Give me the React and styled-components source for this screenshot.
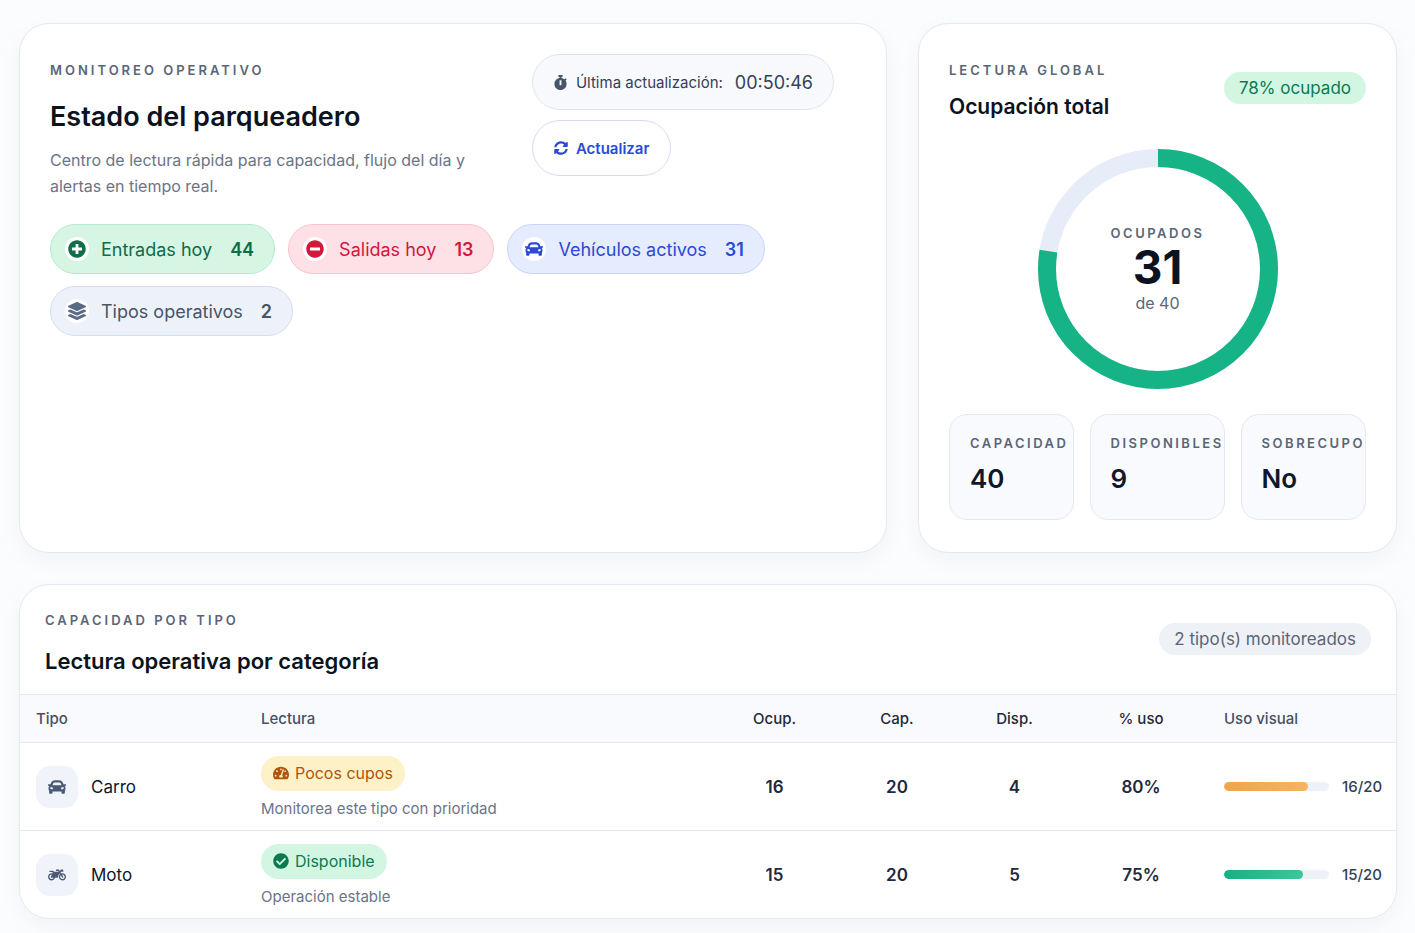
import React from "react";
import styled, { createGlobalStyle } from "styled-components";
import { FaStopwatch, FaSyncAlt, FaPlusCircle, FaMinusCircle, FaCar, FaLayerGroup, FaMotorcycle, FaCheckCircle, FaTachometerAlt } from "react-icons/fa";

const Global = createGlobalStyle`
  body { margin: 0; background: #fbfcfe; font-family: Inter, "Noto Sans", sans-serif; color: #0f172a; }
`;

const Page = styled.div`
  padding: 23px 18px 20px 19px;
  display: flex;
  flex-direction: column;
  gap: 31px;
`;

const Top = styled.div`
  display: grid;
  grid-template-columns: 868px 479px;
  gap: 31px;
`;

const Card = styled.section`
  background: #fff;
  border: 1px solid #e3e9f2;
  border-radius: 30px;
  box-shadow: 0 8px 24px rgba(15, 23, 42, 0.04);
  padding: ${p => p.$pad || "30px"};
  box-sizing: border-box;
  height: ${p => p.$h || "auto"};
  overflow: hidden;
`;

const Eyebrow = styled.div`
  font-size: 13px;
  font-weight: 600;
  letter-spacing: 3px;
  color: #5b6578;
  text-transform: uppercase;
`;

const Title = styled.h2`
  margin: ${p => p.$m || "22px 0 0"};
  font-size: ${p => p.$size || "27px"};
  font-weight: 600;
  color: #0b1220;
`;

const HeadRow = styled.div`
  display: flex;
  justify-content: space-between;
`;

const Sub = styled.p`
  margin: 14px 0 0;
  font-size: 16px;
  line-height: 26px;
  color: #6b7487;
  width: 460px;
`;

const Actions = styled.div`
  display: flex;
  flex-direction: column;
  align-items: flex-start;
  gap: 10px;
  margin-top: 0;
  margin-right: 22px;
`;

const Pill = styled.div`
  display: inline-flex;
  align-items: center;
  gap: 8px;
  height: 56px;
  padding: 0 20px;
  border-radius: 28px;
  border: 1px solid ${p => p.$border || "#dde4f1"};
  background: ${p => p.$bg || "#f7f9fd"};
  color: ${p => p.$color || "#334155"};
  font-size: 15px;
  box-sizing: border-box;
  font-weight: ${p => p.$weight || 400};
`;

const Time = styled.span`
  font-size: 18px;
  color: #334155;
  margin-left: 4px;
`;

const Chips = styled.div`
  display: flex;
  flex-wrap: wrap;
  gap: 12px 13px;
  margin-top: 25px;
  width: 740px;
`;

const Chip = styled.div`
  display: inline-flex;
  align-items: center;
  height: 50px;
  padding: 0 20px 0 14px;
  border-radius: 25px;
  box-sizing: border-box;
  background: ${p => p.$bg};
  border: 1px solid ${p => p.$border};
  color: ${p => p.$color};
  font-size: 18px;
`;

const ChipIcon = styled.span`
  width: 24px;
  height: 24px;
  border-radius: 50%;
  background: #fff;
  display: inline-flex;
  align-items: center;
  justify-content: center;
  margin-right: 12px;
  font-size: 18px;
`;

const ChipNum = styled.b`
  font-weight: 600;
  margin-left: 18px;
`;

const Badge = styled.span`
  display: inline-flex;
  align-items: center;
  gap: 6px;
  height: ${p => p.$h || "32px"};
  padding: 0 15px;
  border-radius: 16px;
  background: ${p => p.$bg};
  color: ${p => p.$color};
  font-size: ${p => p.$size || "17px"};
  white-space: nowrap;
`;

const DonutWrap = styled.div`
  position: relative;
  width: 240px;
  height: 240px;
  margin: 30px auto 25px;
`;

const DonutLabel = styled.div`
  position: absolute;
  inset: 0;
  display: flex;
  flex-direction: column;
  align-items: center;
  justify-content: center;
`;

const Small = styled.div`
  font-size: 13px;
  font-weight: 600;
  letter-spacing: 2.5px;
  color: #5b6578;
`;

const Big = styled.div`
  font-size: 46px;
  font-weight: 700;
  line-height: 52px;
  color: #0b1220;
`;

const Of = styled.div`
  font-size: 16px;
  color: #5b6578;
`;

const Stats = styled.div`
  display: grid;
  grid-template-columns: repeat(3, 1fr);
  gap: 16px;
`;

const Stat = styled.div`
  height: 106px;
  border: 1px solid #e3e9f2;
  border-radius: 18px;
  background: #f8fafd;
  padding: 20px 0 0 20px;
  box-sizing: border-box;
`;

const StatVal = styled.div`
  font-size: 26px;
  font-weight: 600;
  margin-top: 12px;
`;

const Cols = "225px 452px 123px 122px 113px 140px 1fr";

const TableHead = styled.div`
  display: grid;
  grid-template-columns: ${Cols};
  padding: 0 16px;
  height: 47px;
  align-items: center;
  border-top: 1px solid #e3e9f2;
  border-bottom: 1px solid #e3e9f2;
  background: #f8fafd;
  font-size: 15px;
  font-weight: 500;
  color: #475063;
`;

const Row = styled.div`
  display: grid;
  grid-template-columns: ${Cols};
  padding: 0 16px;
  height: 87px;
  align-items: center;
  border-bottom: ${p => (p.$last ? "none" : "1px solid #e3e9f2")};
  font-size: 17px;
`;

const Center = styled.div`
  text-align: center;
  font-weight: ${p => p.$w || 500};
  color: #1e293b;
`;

const TypeCell = styled.div`
  display: flex;
  align-items: center;
  gap: 13px;
`;

const TypeIcon = styled.span`
  width: 42px;
  height: 42px;
  border-radius: 14px;
  background: #f0f3f9;
  display: flex;
  align-items: center;
  justify-content: center;
  color: #4b5a74;
  font-size: 18px;
`;

const Note = styled.div`
  font-size: 15px;
  color: #6b7487;
  margin-top: 8px;
`;

const Bar = styled.div`
  display: flex;
  align-items: center;
  gap: 13px;
  font-size: 15px;
  font-weight: 500;
  color: #334155;
`;

const Track = styled.div`
  width: 105px;
  height: 9px;
  border-radius: 5px;
  background: #eef1f7;
  overflow: hidden;
`;

const Fill = styled.div`
  height: 100%;
  border-radius: 5px;
  background: ${p => p.$c};
`;

const rows = [
  { name: "Carro", icon: <FaCar />, badge: "Pocos cupos", bIcon: <FaTachometerAlt />, bBg: "#fdf1c7", bColor: "#b4530a", note: "Monitorea este tipo con prioridad", o: 16, c: 20, d: 4, p: 80, fill: "linear-gradient(90deg,#f0a548,#f5b462)" },
  { name: "Moto", icon: <FaMotorcycle />, badge: "Disponible", bIcon: <FaCheckCircle />, bBg: "#d3f6e3", bColor: "#0b7a4f", note: "Operación estable", o: 15, c: 20, d: 5, p: 75, fill: "linear-gradient(90deg,#14b184,#3cc79a)" },
];

export default function App() {
  const r = 111, circ = 2 * Math.PI * r;
  return (
    <Page>
      <Global />
      <Top>
        <Card $h="530px">
          <HeadRow>
            <div>
              <Eyebrow style={{ marginTop: 8 }}>Monitoreo operativo</Eyebrow>
              <Title>Estado del parqueadero</Title>
              <Sub>Centro de lectura rápida para capacidad, flujo del día y alertas en tiempo real.</Sub>
            </div>
            <Actions>
              <Pill><FaStopwatch color="#475569" /> Última actualización: <Time>00:50:46</Time></Pill>
              <Pill $bg="#fff" $border="#d3dcf3" $color="#2b49d8" $weight={600} style={{ padding: "0 21px" }}>
                <FaSyncAlt size={14} /> Actualizar
              </Pill>
            </Actions>
          </HeadRow>
          <Chips>
            <Chip $bg="#d6f5e3" $border="#b6ead0" $color="#0f6b48"><ChipIcon><FaPlusCircle color="#0e6e48" /></ChipIcon>Entradas hoy<ChipNum>44</ChipNum></Chip>
            <Chip $bg="#fde1e6" $border="#f8c4cd" $color="#d2163c"><ChipIcon><FaMinusCircle color="#d2163c" /></ChipIcon>Salidas hoy<ChipNum>13</ChipNum></Chip>
            <Chip $bg="#e4ecfd" $border="#c7d6f8" $color="#2b49d8"><ChipIcon><FaCar color="#2b49d8" /></ChipIcon>Vehículos activos<ChipNum>31</ChipNum></Chip>
            <Chip $bg="#edf2fa" $border="#d5deec" $color="#475569"><ChipIcon><FaLayerGroup color="#5b6b85" /></ChipIcon>Tipos operativos<ChipNum>2</ChipNum></Chip>
          </Chips>
        </Card>
        <Card $h="530px">
          <HeadRow>
            <div>
              <Eyebrow style={{ marginTop: 8 }}>Lectura global</Eyebrow>
              <Title $size="21px" $m="16px 0 0">Ocupación total</Title>
            </div>
            <Badge $bg="#d3f6e3" $color="#0b7a4f" style={{ marginTop: 18 }}>78% ocupado</Badge>
          </HeadRow>
          <DonutWrap>
            <svg width="240" height="240" viewBox="0 0 240 240">
              <circle cx="120" cy="120" r={r} fill="none" stroke="#e6ecf8" strokeWidth="18" />
              <circle cx="120" cy="120" r={r} fill="none" stroke="#16b386" strokeWidth="18"
                strokeDasharray={`${circ * 0.775} ${circ}`} transform="rotate(-90 120 120)" />
            </svg>
            <DonutLabel>
              <Small>OCUPADOS</Small>
              <Big>31</Big>
              <Of>de 40</Of>
            </DonutLabel>
          </DonutWrap>
          <Stats>
            <Stat><Small>CAPACIDAD</Small><StatVal>40</StatVal></Stat>
            <Stat><Small>DISPONIBLES</Small><StatVal>9</StatVal></Stat>
            <Stat><Small>SOBRECUPO</Small><StatVal>No</StatVal></Stat>
          </Stats>
        </Card>
      </Top>
      <Card $pad="0">
        <HeadRow style={{ padding: "27px 25px 20px" }}>
          <div>
            <Eyebrow>Capacidad por tipo</Eyebrow>
            <Title $size="22px" $m="20px 0 0">Lectura operativa por categoría</Title>
          </div>
          <Badge $bg="#eef1f6" $color="#5b6578" style={{ marginTop: 11 }}>2 tipo(s) monitoreados</Badge>
        </HeadRow>
        <TableHead>
          <div>Tipo</div><div>Lectura</div><Center>Ocup.</Center><Center>Cap.</Center><Center>Disp.</Center><Center>% uso</Center><div style={{ paddingLeft: 13 }}>Uso visual</div>
        </TableHead>
        {rows.map((x, i) => (
          <Row key={x.name} $last={i === rows.length - 1}>
            <TypeCell><TypeIcon>{x.icon}</TypeIcon>{x.name}</TypeCell>
            <div>
              <Badge $bg={x.bBg} $color={x.bColor} $size="16px" $h="35px" style={{ borderRadius: 18, padding: "0 12px" }}>{x.bIcon}{x.badge}</Badge>
              <Note>{x.note}</Note>
            </div>
            <Center $w={600}>{x.o}</Center>
            <Center $w={600}>{x.c}</Center>
            <Center $w={600}>{x.d}</Center>
            <Center $w={600}>{x.p}%</Center>
            <Bar style={{ paddingLeft: 13 }}><Track><Fill $c={x.fill} style={{ width: `${x.p}%` }} /></Track>{x.o}/{x.c}</Bar>
          </Row>
        ))}
      </Card>
    </Page>
  );
}
